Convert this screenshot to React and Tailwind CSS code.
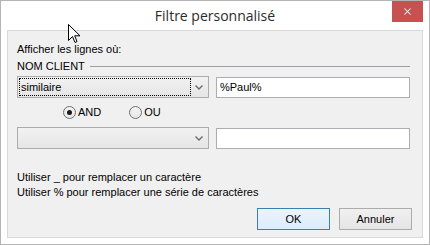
import { X } from 'lucide-react'

function Chevron() {
  return (
    <svg width="8" height="5" viewBox="0 0 8 5" className="shrink-0">
      <path d="M0.5 0.5 L4 4 L7.5 0.5" fill="none" stroke="#6d6d6d" strokeWidth="1.4" />
    </svg>
  )
}

function Combo({ value, focused }) {
  return (
    <div className="w-[192px] h-[22px] border border-[#acacac] bg-gradient-to-b from-[#f2f2f2] to-[#e5e5e5] flex items-center p-[1px]">
      <div className={`flex-1 h-full flex items-center pl-[1px] ${focused ? 'border border-dotted border-black' : ''}`}>
        <span className="leading-none">{value}</span>
      </div>
      <div className="w-[16px] flex justify-center items-center">
        <Chevron />
      </div>
    </div>
  )
}

function Field({ value }) {
  return (
    <div className="w-[194px] h-[21px] border border-[#abadb3] bg-white flex items-center px-[3px]">
      <span className="leading-none">{value}</span>
    </div>
  )
}

function Radio({ label, checked }) {
  return (
    <label className="flex items-center gap-[2px]">
      <span className="w-[13px] h-[13px] rounded-full border border-[#707070] bg-gradient-to-b from-[#f4f4f4] to-[#e6e6e6] flex items-center justify-center">
        {checked && <span className="w-[5px] h-[5px] rounded-full bg-[#1a1a1a]" />}
      </span>
      <span>{label}</span>
    </label>
  )
}

function Cursor() {
  return (
    <svg width="13" height="20" viewBox="0 0 13 20" className="absolute left-[67px] top-[23px]">
      <path d="M0.5 0.5 L0.5 16.5 L4.5 12.5 L7 18.5 L9 17.5 L6.7 11.8 L12 11.8 Z" fill="#fff" stroke="#000" strokeWidth="1" strokeLinejoin="miter" />
    </svg>
  )
}

export default function App() {
  return (
    <div className="relative w-[430px] h-[245px] bg-white border border-[#b4b4b4] px-[6px] pb-[6px] flex flex-col text-[11px] text-black font-['Liberation_Sans',Arial,sans-serif]">
      <div className="h-[29px] flex items-center justify-center">
        <span className="text-[14px] text-[#2b2b2b] font-['Open_Sans','Noto_Sans',sans-serif]">Filtre personnalisé</span>
      </div>
      <button className="absolute right-[6px] top-0 w-[31px] h-[21px] bg-[#c75050] flex items-center justify-center">
        <X size={11} strokeWidth={2.2} color="#fff" />
      </button>

      <div className="flex-1 bg-[#f0f0f0] border border-[#d9d9d9] pl-[9px] pr-[12px] flex flex-col">
        <div className="mt-[12px] h-[13px] leading-[13px]">Afficher les lignes où:</div>
        <div className="mt-[4px] flex items-center h-[13px] leading-[13px]">
          <span>NOM CLIENT</span>
          <div className="flex-1 ml-[5px] h-px bg-[#a0a0a0]" />
        </div>

        <div className="mt-[3px] flex items-center gap-[7px]">
          <Combo value="similaire" focused />
          <Field value="%Paul%" />
        </div>

        <div className="mt-[7px] h-[15px] flex items-center pl-[46px] gap-[28px]">
          <Radio label="AND" checked />
          <Radio label="OU" />
        </div>

        <div className="mt-[7px] flex items-center gap-[7px]">
          <Combo value="" />
          <Field value="" />
        </div>

        <div className="mt-[21px] leading-[15px]">Utiliser _ pour remplacer un caractère</div>
        <div className="leading-[15px]">Utiliser % pour remplacer une série de caractères</div>

        <div className="mt-[8px] flex justify-end gap-[9px]">
          <button className="w-[73px] h-[22px] border border-[#3c7fb1] bg-gradient-to-b from-[#eaf4fb] to-[#dcecfc]">OK</button>
          <button className="w-[73px] h-[22px] border border-[#acacac] bg-gradient-to-b from-[#f0f0f0] to-[#e5e5e5] -mr-[2px]">Annuler</button>
        </div>
      </div>
      <Cursor />
    </div>
  )
}
